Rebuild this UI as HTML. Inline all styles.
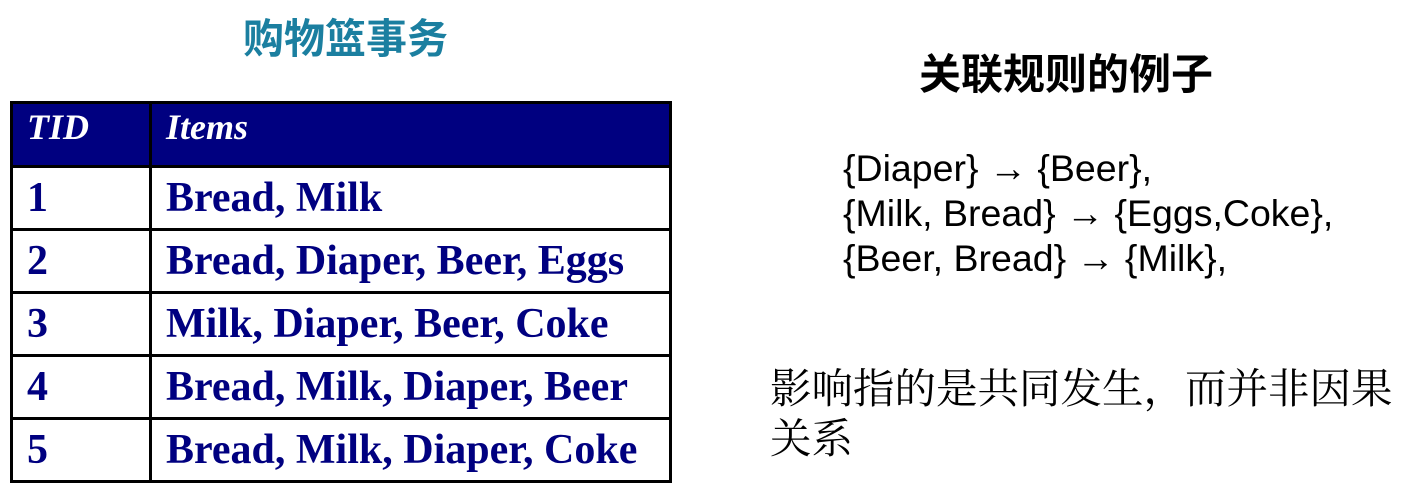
<!DOCTYPE html>
<html><head><meta charset="utf-8"><style>
body{margin:0;width:1401px;height:490px;background:#fff;position:relative;overflow:hidden}
.t{position:absolute;white-space:nowrap}
.title{left:243px;top:9px;font:bold 41px "Noto Sans CJK SC",sans-serif;color:#1b7fa0;line-height:52px}
.rt{left:919px;top:46px;font:bold 42px "Noto Sans CJK SC",sans-serif;color:#000;line-height:52px}
.rule{left:843px;font:37.5px "Liberation Sans",sans-serif;color:#000;line-height:44px}
.rule b{font-weight:normal;font-family:"Liberation Serif",serif;font-size:38px}
.cn{left:770px;font:41.5px "Noto Serif CJK SC",serif;color:#000;line-height:50px}
table{position:absolute;left:10px;top:101px;border-collapse:collapse;width:662px}
td{border:3px solid #000;height:60px;padding:0 0 0 14px;font:bold 42px "Liberation Serif",serif;color:#000080;vertical-align:middle}
tr.h td{background:#000080;color:#fff;font-style:italic;font-size:36px;vertical-align:top;padding-top:2px;height:59px}
td.c1{width:122px}
</style></head><body>
<div class="t title">购物篮事务</div>
<div class="t rt">关联规则的例子</div>
<div class="t rule" style="top:146px">{Diaper} <b>→</b> {Beer},</div>
<div class="t rule" style="top:191px">{Milk, Bread} <b>→</b> {Eggs,Coke},</div>
<div class="t rule" style="top:236px">{Beer, Bread} <b>→</b> {Milk},</div>
<div class="t cn" style="top:360px">影响指的是共同发生，而并非因果</div>
<div class="t cn" style="top:410px">关系</div>
<table>
<tr class="h"><td class="c1">TID</td><td>Items</td></tr>
<tr><td>1</td><td>Bread, Milk</td></tr>
<tr><td>2</td><td>Bread, Diaper, Beer, Eggs</td></tr>
<tr><td>3</td><td>Milk, Diaper, Beer, Coke</td></tr>
<tr><td>4</td><td>Bread, Milk, Diaper, Beer</td></tr>
<tr><td>5</td><td>Bread, Milk, Diaper, Coke</td></tr>
</table>
</body></html>
